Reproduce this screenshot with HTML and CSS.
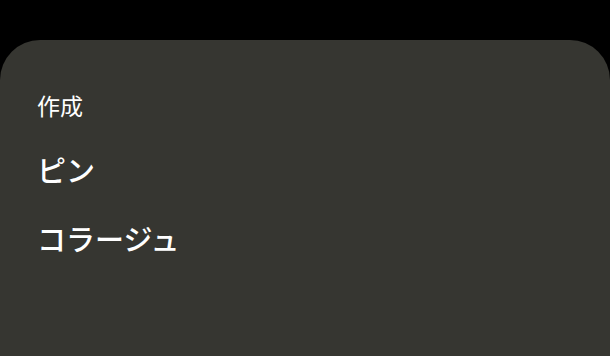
FILE: index.html
```html
<!DOCTYPE html>
<html lang="ja">
<head>
<meta charset="utf-8">
<link rel="stylesheet" href="styles.css">
</head>
<body>
<div class="sheet">
  <div class="label">作成</div>
  <div class="item">ピン</div>
  <div class="item">コラージュ</div>
</div>
</body>
</html>
```
FILE: styles.css
```css
html, body {
  margin: 0;
  padding: 0;
  background: #000;
  width: 610px;
  height: 356px;
  overflow: hidden;
}
.sheet {
  margin-top: 40px;
  height: 316px;
  background: #363631;
  border-radius: 40px 40px 0 0;
  padding: 53px 0 0 37px;
  box-sizing: border-box;
  display: flex;
  flex-direction: column;
  font-family: "Noto Sans CJK JP", "Noto Sans", sans-serif;
  color: #fff;
}
.label {
  font-size: 23px;
  line-height: 24px;
  font-weight: 400;
  margin-bottom: 38px;
}
.item {
  font-size: 29px;
  line-height: 29px;
  font-weight: 500;
  margin-bottom: 40px;
}
```
